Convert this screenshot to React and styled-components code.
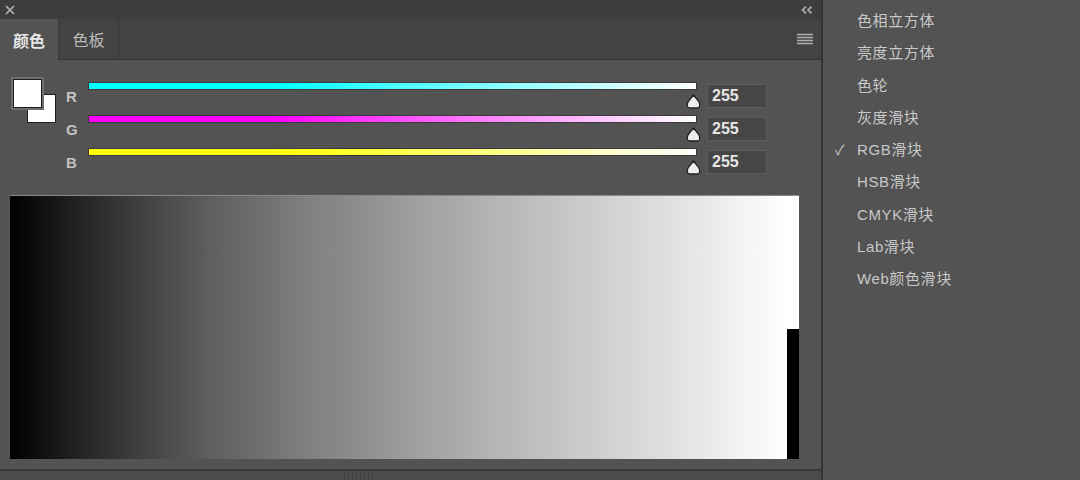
import styled, { createGlobalStyle } from "styled-components";

const GlobalStyle = createGlobalStyle`
  html, body {
    margin: 0;
    padding: 0;
    background: #535353;
    font-family: "Liberation Sans", "Noto Sans CJK SC", sans-serif;
  }
`;

const Page = styled.div`
  display: flex;
  width: 1080px;
  height: 480px;
  overflow: hidden;
  background: #535353;
`;

const Panel = styled.div`
  width: 821px;
  display: flex;
  flex-direction: column;
  border-right: 2px solid #343434;
`;

const TopBar = styled.div`
  height: 19px;
  background: #3d3d3d;
  display: flex;
  align-items: center;
  justify-content: space-between;
  padding: 0 8px 0 5px;
  color: #b4b4b4;
`;

const TabRow = styled.div`
  height: 41px;
  display: flex;
  background: #434343;
  border-bottom: 1px solid #353535;
  box-sizing: border-box;
  align-items: stretch;
`;

const Tab = styled.div`
  width: ${(p) => (p.active ? "58px" : "59px")};
  display: flex;
  align-items: center;
  justify-content: center;
  font-size: 16px;
  font-weight: ${(p) => (p.active ? 700 : 400)};
  color: ${(p) => (p.active ? "#e8e8e8" : "#bcbcbc")};
  background: ${(p) => (p.active ? "#535353" : "#434343")};
  border-right: 1px solid ${(p) => (p.active ? "#3a3a3a" : "#353535")};
  margin-bottom: ${(p) => (p.active ? "-1px" : "0")};
`;

const TabFill = styled.div`
  flex: 1;
  display: flex;
  align-items: center;
  justify-content: flex-end;
  padding-right: 8px;
`;

const Body = styled.div`
  flex: 1;
  display: flex;
  flex-direction: column;
  padding: 16px 0 0 10px;
`;

const Controls = styled.div`
  display: flex;
  height: 119px;
`;

const Swatches = styled.div`
  position: relative;
  width: 50px;
  height: 50px;
`;

const Swatch = styled.div`
  position: absolute;
  left: ${(p) => p.x}px;
  top: ${(p) => p.y}px;
  width: ${(p) => p.size}px;
  height: ${(p) => p.size}px;
  background: #ffffff;
  border: 1px solid #1e1e1e;
  box-shadow: ${(p) => (p.front ? "0 0 0 2px #6e6e6e" : "none")};
  box-sizing: border-box;
`;

const Sliders = styled.div`
  display: flex;
  flex-direction: column;
  margin-left: 6px;
  padding-top: 6px;
`;

const SliderRow = styled.div`
  display: flex;
  align-items: flex-start;
  height: 33px;
`;

const Label = styled.div`
  width: 22px;
  margin-top: 7px;
  font-size: 15px;
  font-weight: 700;
  color: #c4c4c4;
  line-height: 16px;
`;

const TrackCol = styled.div`
  position: relative;
  width: 609px;
  height: 27px;
`;

const Bar = styled.div`
  height: 8px;
  box-sizing: border-box;
  border: 1px solid #3a3a3a;
  background: linear-gradient(to right, ${(p) => p.from} 0%, ${(p) => p.from} 30%, #ffffff 100%);
`;

const Thumb = styled.svg`
  position: absolute;
  left: 597px;
  top: 12px;
`;

const ValueBox = styled.div`
  width: 60px;
  height: 24px;
  margin: 2px 0 0 10px;
  box-sizing: border-box;
  background: #464646;
  border: 1px solid #5d5d5d;
  color: #e6e6e6;
  font-size: 16px;
  font-weight: 700;
  line-height: 22px;
  padding-left: 4px;
`;

const Spectrum = styled.div`
  display: flex;
  width: 789px;
  height: 264px;
  border-top: 1px solid #8a8a8a;
  box-sizing: border-box;
`;

const Ramp = styled.div`
  flex: 1;
  background: linear-gradient(
    to right,
    #000000 0%,
    #1c1c1c 7%,
    #3a3a3a 15%,
    #5c5c5c 25%,
    #7c7c7c 37%,
    #9a9a9a 50%,
    #b4b4b4 62%,
    #cdcdcd 75%,
    #e6e6e6 88%,
    #ffffff 100%
  );
`;

const EndCaps = styled.div`
  width: 12px;
  display: flex;
  flex-direction: column;
`;

const Cap = styled.div`
  flex: ${(p) => p.grow};
  background: ${(p) => p.color};
`;

const Footer = styled.div`
  height: 9px;
  border-top: 2px solid #3a3a3a;
  background: #4b4b4b;
  display: flex;
  justify-content: center;
`;

const Grip = styled.div`
  width: 29px;
  margin: 2px 0 0 -105px;
  background: repeating-linear-gradient(to right, #3e3e3e 0 1px, transparent 1px 4px);
`;

const Menu = styled.ul`
  flex: 1;
  list-style: none;
  margin: 0;
  padding: 5px 0 0 0;
  background: #535353;
`;

const MenuItem = styled.li`
  position: relative;
  height: 32.3px;
  line-height: 32px;
  padding-left: 34px;
  font-size: 15px;
  color: #c8c8c8;
  letter-spacing: 0.6px;
`;

const Check = styled.span`
  position: absolute;
  left: 12px;
  top: 0;
  font-size: 14px;
  color: #c8c8c8;
`;

const sliders = [
  { name: "R", color: "#00ffff" },
  { name: "G", color: "#ff00ff" },
  { name: "B", color: "#ffff00" },
];

const menu = [
  "色相立方体",
  "亮度立方体",
  "色轮",
  "灰度滑块",
  "RGB滑块",
  "HSB滑块",
  "CMYK滑块",
  "Lab滑块",
  "Web颜色滑块",
];

const ThumbIcon = () => (
  <Thumb width="17" height="15" viewBox="0 0 17 15">
    <path
      d="M8.5 1 L13.8 7.5 Q16.5 14 11.5 14 H5.5 Q0.5 14 3.2 7.5 Z"
      fill="#eeeeee"
      stroke="#1f1f1f"
      strokeWidth="1.3"
    />
  </Thumb>
);

const App = () => {
  return (
    <Page>
      <GlobalStyle />
      <Panel>
        <TopBar>
          <svg width="10" height="10" viewBox="0 0 10 10">
            <path d="M1 1 L9 9 M9 1 L1 9" stroke="#b4b4b4" strokeWidth="1.6" />
          </svg>
          <svg width="12" height="8" viewBox="0 0 12 8">
            <path d="M5 0.5 L1.5 4 L5 7.5 M10.5 0.5 L7 4 L10.5 7.5" stroke="#a8a8a8" strokeWidth="1.8" fill="none" />
          </svg>
        </TopBar>
        <TabRow>
          <Tab active>颜色</Tab>
          <Tab>色板</Tab>
          <TabFill>
            <svg width="16" height="12" viewBox="0 0 16 12">
              <path d="M0 1.5 H16 M0 4.5 H16 M0 7.5 H16 M0 10.5 H16" stroke="#b0b0b0" strokeWidth="1.6" />
            </svg>
          </TabFill>
        </TabRow>
        <Body>
          <Controls>
            <Swatches>
              <Swatch x={17} y={18} size={29} />
              <Swatch x={3} y={3} size={29} front />
            </Swatches>
            <Sliders>
              {sliders.map((s) => (
                <SliderRow key={s.name}>
                  <Label>{s.name}</Label>
                  <TrackCol>
                    <Bar from={s.color} />
                    <ThumbIcon />
                  </TrackCol>
                  <ValueBox>255</ValueBox>
                </SliderRow>
              ))}
            </Sliders>
          </Controls>
          <Spectrum>
            <Ramp />
            <EndCaps>
              <Cap grow={133} color="#ffffff" />
              <Cap grow={131} color="#000000" />
            </EndCaps>
          </Spectrum>
        </Body>
        <Footer>
          <Grip />
        </Footer>
      </Panel>
      <Menu>
        {menu.map((m) => (
          <MenuItem key={m}>
            {m === "RGB滑块" && <Check>✓</Check>}
            {m}
          </MenuItem>
        ))}
      </Menu>
    </Page>
  );
};

export default App;
